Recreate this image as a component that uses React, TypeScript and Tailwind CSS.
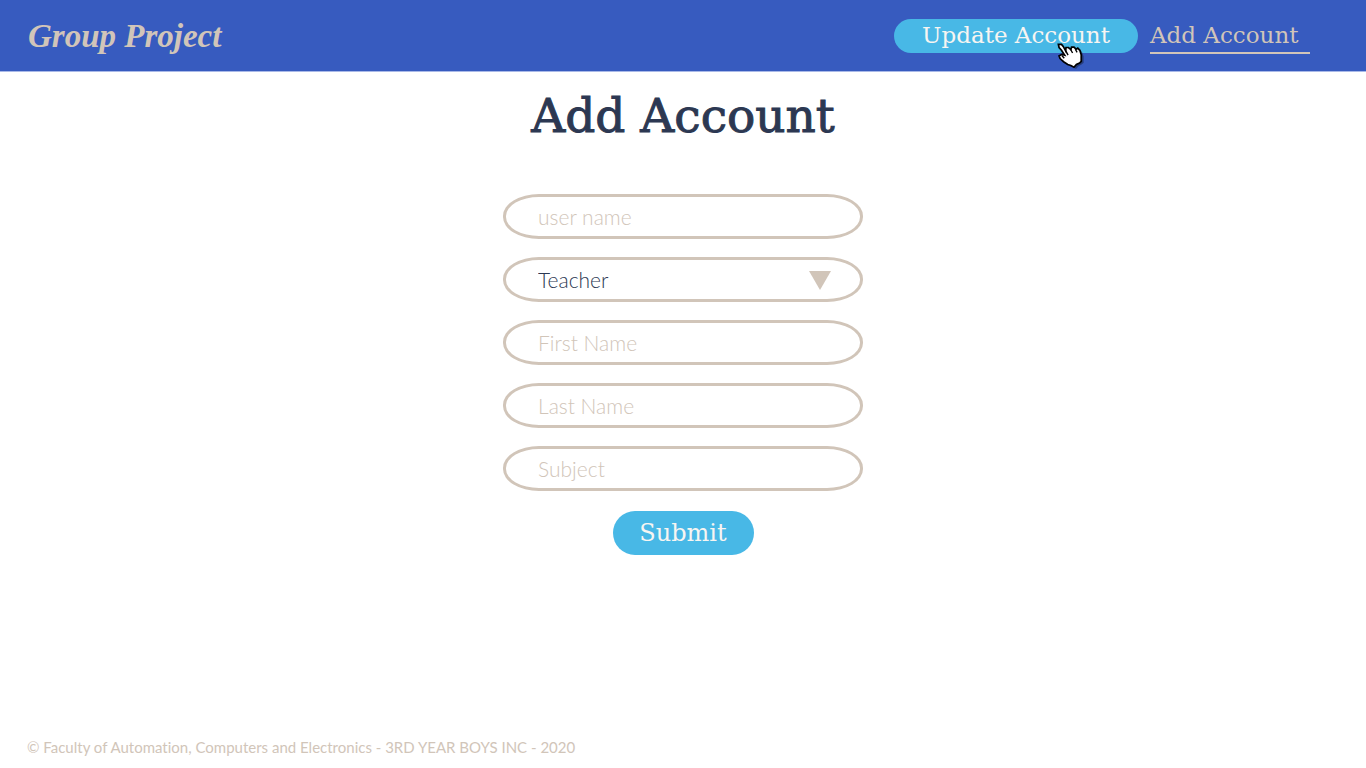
import type { SVGProps } from "react";

const textFields = [
  { id: "first-name", label: "First Name" },
  { id: "last-name", label: "Last Name" },
  { id: "subject", label: "Subject" },
];

const fieldClass =
  "block h-[45px] w-full appearance-none rounded-[36px/22px] border-3 border-[#d1c5b9] bg-transparent px-8 text-[21px] font-light text-[#2c3852] outline-none placeholder:text-[#d1c5b9] placeholder:opacity-100";

function HandPointer(props: SVGProps<SVGSVGElement>) {
  return (
    <svg viewBox="0 0 78 78" aria-hidden="true" {...props}>
      <path
        d="M7 7h8l6 8 6 8 1-10h7l6 6 2-7h8l6 6 4-3 7 6 5 14v18l-6 5-9 5-7 8-8-5-9-3-12-9-9-7-2-10 8-3 7 2-9-13-6-9z"
        transform="translate(4 4)"
        fill="#16223f"
        opacity="0.5"
      />
      <path
        d="M4 4h9l5 6 7 13 1-10h7l7 6 2-7h7l6 6 5-3 6 6 4 13v19l-5 5-9 4-7 8-9-5-9-3-12-8-10-9-3-8 8-4 8 2-9-14-7-8z"
        fill="#fff"
        stroke="#000"
        strokeWidth="5"
      />
      <path d="M25 22l7 13M39 18l6 11M53 18l5 9M14 36l7 8" fill="none" stroke="#000" strokeWidth="4" />
    </svg>
  );
}

export default function App() {
  return (
    <div className="flex min-h-screen flex-col bg-white font-['Lato',sans-serif] text-[#2c3852]">
      <header className="flex h-[72px] items-center justify-between border-b border-[#a9b9e8] bg-[#375bbf] pt-0.5 pr-14 pl-7">
        <a
          href="#home"
          className="font-['Liberation_Serif',serif] text-[33px] font-bold text-[#d1c5b9] italic"
        >
          Group Project
        </a>
        <nav className="flex gap-3 font-['DejaVu_Serif',serif] text-[23px] leading-8">
          <a
            href="#update"
            className="relative flex h-[34px] w-[244px] justify-center rounded-full bg-[#48b8e6] text-[#f7f5f2]"
          >
            Update Account
            <HandPointer className="absolute top-6 left-[163px] size-[27px]" />
          </a>
          <a href="#add" className="h-[35px] w-40 border-b-2 border-[#d1c5b9] text-[#d1c5b9]">
            Add Account
          </a>
        </nav>
      </header>

      <main className="flex grow flex-col items-center px-4 pt-4">
        <h1 className="font-['DejaVu_Serif',serif] text-[47px] leading-14 [-webkit-text-stroke:1px]">Add Account</h1>
        <form className="mt-[50px] flex w-full max-w-90 flex-col gap-[18px]" onSubmit={(e) => e.preventDefault()}>
          <input id="user-name" aria-label="user name" placeholder="user name" className={fieldClass} />
          <div className="relative">
            <select id="role" aria-label="Role" defaultValue="Teacher" className={fieldClass}>
              <option>Teacher</option>
            </select>
            <svg
              viewBox="0 0 22 19"
              aria-hidden="true"
              className="pointer-events-none absolute top-[14px] right-8 h-[19px] w-[22px] fill-[#d1c5b9]"
            >
              <path d="M0 0h22L11 19z" />
            </svg>
          </div>
          {textFields.map(({ id, label }) => (
            <input key={id} id={id} aria-label={label} placeholder={label} className={fieldClass} />
          ))}
          <button
            type="submit"
            className="mt-0.5 h-11 w-[141px] self-center rounded-full bg-[#48b8e6] font-['DejaVu_Serif',serif] text-2xl text-[#f7f5f2]"
          >
            Submit
          </button>
        </form>
      </main>

      <footer className="px-[27px] pb-[10px] text-[15px] text-[#d1c5b9] [font-variant-ligatures:none]">
        © Faculty of Automation, Computers and Electronics - 3RD YEAR BOYS INC - 2020
      </footer>
    </div>
  );
}
